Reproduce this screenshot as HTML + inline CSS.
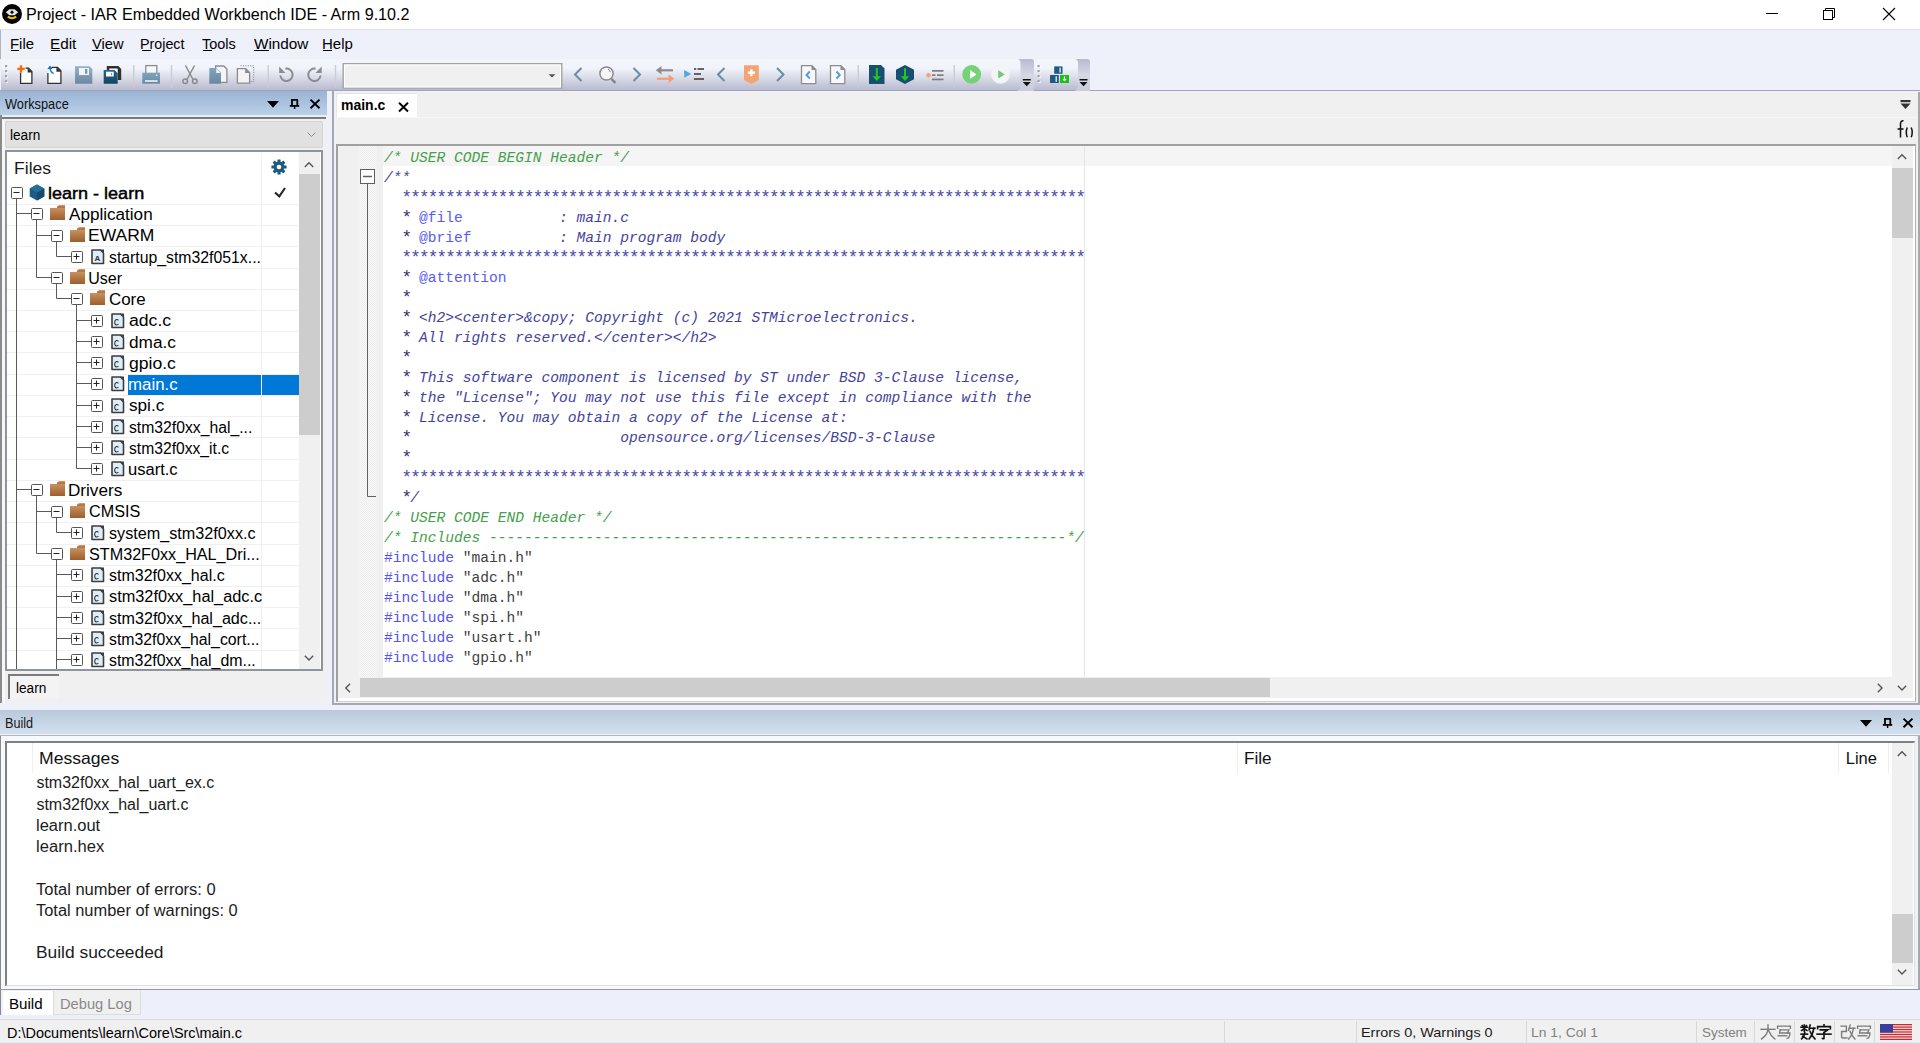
<!DOCTYPE html><html><head><meta charset="utf-8"><style>
*{margin:0;padding:0;box-sizing:border-box}
html,body{width:1920px;height:1043px;overflow:hidden;background:#eef1fa;font-family:"Liberation Sans",sans-serif;color:#000}
.a{position:absolute}
.t{position:absolute;white-space:pre;line-height:1}
svg{position:absolute;overflow:visible}
.code{position:absolute;left:384px;font-family:"Liberation Mono",monospace;font-size:14.583px;white-space:pre;line-height:20px;color:#35359a}
.g{color:#45a04a;font-style:italic}
.d{color:#43439e;font-style:italic}
.k{color:#5a5af2;font-style:normal}
.s{color:#404040}
.p{color:#5454f2}
.st1{line-height:0;font-size:17.5px;letter-spacing:-1.75px;position:relative;top:1.2px;font-style:normal;color:#353570}
.st{line-height:0;font-size:17.5px;letter-spacing:-1.75px;position:relative;top:1.2px;font-style:normal;color:#4a4aa6}
</style></head><body>
<div class="a" style="left:0px;top:0px;width:1920px;height:29px;background:#fff"></div>
<div class="a" style="left:0px;top:29px;width:1920px;height:1px;background:#dfe1ea"></div>
<svg style="left:2px;top:4px" width="21" height="21" viewBox="0 0 21 21"><circle cx="10" cy="10" r="10" fill="#050505"/><path d="M3.8 8.2 L7.5 5.2 H12.5 L16.2 8.2 L12.5 11.2 H7.5Z" fill="#e6e6e6"/><path d="M10 6.2 L12 8.2 L10 10.2 L8 8.2Z" fill="#111"/><path d="M5.8 12.6 Q10 15.8 14.2 12.6" fill="none" stroke="#e8c800" stroke-width="2"/></svg>
<div class="t" style="left:26.21px;top:7px;font-size:15.8px;color:#000;transform:scaleX(1.0214);transform-origin:0 0;">Project - IAR Embedded Workbench IDE - Arm 9.10.2</div>
<svg style="left:1760.5px;top:8px" width="140" height="14"><line x1="5" y1="5.5" x2="17" y2="5.5" stroke="#000" stroke-width="1"/><rect x="62.5" y="2.5" width="9" height="9" fill="none" stroke="#000"/><path d="M64.5 2.5 V0.5 H73.5 V9.5 H71.5" fill="none" stroke="#000"/><path d="M122 0 L134 12 M134 0 L122 12" stroke="#000" stroke-width="1.1"/></svg>
<div class="a" style="left:0px;top:30px;width:1920px;height:29px;background:#eef0fa"></div>
<div class="a" style="left:0px;top:30px;width:1px;height:29px;background:#b0b3c0"></div>
<div class="t" style="left:10.11px;top:37px;font-size:14.8px;color:#000;transform:scaleX(1.0056);transform-origin:0 0;">File</div>
<div class="a" style="left:11px;top:50px;width:8px;height:1px;background:#000"></div>
<div class="t" style="left:49.78px;top:37px;font-size:14.8px;color:#000;transform:scaleX(1.0331);transform-origin:0 0;">Edit</div>
<div class="a" style="left:51px;top:50px;width:9px;height:1px;background:#000"></div>
<div class="t" style="left:92.23px;top:37px;font-size:14.8px;color:#000;transform:scaleX(0.9923);transform-origin:0 0;">View</div>
<div class="a" style="left:92px;top:50px;width:11px;height:1px;background:#000"></div>
<div class="t" style="left:140.46px;top:37px;font-size:14.8px;color:#000;transform:scaleX(0.9649);transform-origin:0 0;">Project</div>
<div class="a" style="left:142px;top:50px;width:9px;height:1px;background:#000"></div>
<div class="t" style="left:202.24px;top:37px;font-size:14.8px;color:#000;transform:scaleX(0.9771);transform-origin:0 0;">Tools</div>
<div class="a" style="left:203px;top:50px;width:9px;height:1px;background:#000"></div>
<div class="t" style="left:254.12px;top:37px;font-size:14.8px;color:#000;transform:scaleX(1.0339);transform-origin:0 0;">Window</div>
<div class="a" style="left:254px;top:50px;width:15px;height:1px;background:#000"></div>
<div class="t" style="left:321.50px;top:37px;font-size:14.8px;color:#000;transform:scaleX(1.0161);transform-origin:0 0;">Help</div>
<div class="a" style="left:323px;top:50px;width:9px;height:1px;background:#000"></div>
<div class="a" style="left:1px;top:59px;width:1033px;height:32px;border-radius:3px 3px 0 0;background:linear-gradient(#f2f5fb 0%,#f1f4fc 28%,#dcdee9 55%,#c9cbdb 78%,#b8bbd0 97%)"></div>
<div class="a" style="left:1034px;top:59px;width:56px;height:32px;border-radius:3px 3px 0 0;background:linear-gradient(#f2f5fb 0%,#f1f4fc 28%,#dcdee9 55%,#c9cbdb 78%,#b8bbd0 97%)"></div>
<div class="a" style="left:0px;top:90px;width:1920px;height:1px;background:#a2a3b6"></div>
<svg style="left:0;top:0" width="1100" height="95"><rect x="5.8" y="65.8" width="2.2" height="2.2" fill="#fff"/><rect x="5" y="65" width="2.2" height="2.2" fill="#a2a2a6"/><rect x="5.8" y="70.8" width="2.2" height="2.2" fill="#fff"/><rect x="5" y="70" width="2.2" height="2.2" fill="#a2a2a6"/><rect x="5.8" y="75.8" width="2.2" height="2.2" fill="#fff"/><rect x="5" y="75" width="2.2" height="2.2" fill="#a2a2a6"/><rect x="5.8" y="80.8" width="2.2" height="2.2" fill="#fff"/><rect x="5" y="80" width="2.2" height="2.2" fill="#a2a2a6"/><rect x="1038.3" y="65.8" width="2.2" height="2.2" fill="#fff"/><rect x="1037.5" y="65" width="2.2" height="2.2" fill="#a2a2a6"/><rect x="1038.3" y="70.8" width="2.2" height="2.2" fill="#fff"/><rect x="1037.5" y="70" width="2.2" height="2.2" fill="#a2a2a6"/><rect x="1038.3" y="75.8" width="2.2" height="2.2" fill="#fff"/><rect x="1037.5" y="75" width="2.2" height="2.2" fill="#a2a2a6"/><rect x="1038.3" y="80.8" width="2.2" height="2.2" fill="#fff"/><rect x="1037.5" y="80" width="2.2" height="2.2" fill="#a2a2a6"/><path d="M20.6 72.5 V83.3 H31.9 V71.5 L28.5 68.1 H25.5" fill="#fff" stroke="#333" stroke-width="1.3"/><path d="M27.6 67.6 L32.4 72.4 H27.6Z" fill="#333"/><path d="M19.8 65.2 H22.2 V67.7 H24.7 V70.1 H22.2 V72.5 H19.8 V70.1 H17.3 V67.7 H19.8Z" fill="#ff6a00"/><path d="M47.9 73 V83.3 H60.9 V70.7 L57.5 67.3 H51.5" fill="#fff" stroke="#333" stroke-width="1.3"/><path d="M56.4 66.8 L61.4 71.8 H56.4Z" fill="#333"/><path d="M49.8 66.5 Q50.2 72.5 53.7 73.5" fill="none" stroke="#1a86d4" stroke-width="1.6"/><path d="M47.3 69 L50 65.8 L52.7 69Z" fill="#0a74c8"/><defs><linearGradient id="sv" x1="0" y1="0" x2="0" y2="1"><stop offset="0" stop-color="#93b3c8"/><stop offset="1" stop-color="#6f86a0"/></linearGradient><linearGradient id="sa" x1="0" y1="0" x2="0" y2="1"><stop offset="0" stop-color="#1e6690"/><stop offset="1" stop-color="#154460"/></linearGradient><linearGradient id="pb" x1="0" y1="0" x2="0" y2="1"><stop offset="0" stop-color="#7fa5bd"/><stop offset="1" stop-color="#6a879f"/></linearGradient></defs><path d="M75 66.3 H89.6 L92.3 69 V83.8 H75Z" fill="url(#sv)"/><rect x="79" y="68" width="10" height="7" fill="#f4f6fa"/><rect x="85" y="69" width="2.3" height="4.8" fill="#6e98b4"/><rect x="109" y="68" width="9" height="12" fill="#fff"/><path d="M106.8 70 V66 H118.3 L121.2 68.9 V80 H117.7 V68.6 H109.3 V70Z" fill="#303030"/><path d="M103.7 70 H114.5 L117.7 73.2 V83.8 H103.7Z" fill="url(#sa)"/><rect x="106" y="71.7" width="7.7" height="4.8" fill="#fff"/><path d="M111.3 72.8 A1.6 1.6 0 0 1 111.3 75.6Z" fill="#1e6690"/><rect x="170.8" y="65" width="1.4" height="23" fill="#cbccd4"/><rect x="267.5" y="65" width="1.4" height="23" fill="#cbccd4"/><rect x="334.8" y="65" width="1.4" height="23" fill="#cbccd4"/><rect x="857.5999999999999" y="65" width="1.4" height="23" fill="#cbccd4"/><rect x="953.5999999999999" y="65" width="1.4" height="23" fill="#cbccd4"/><rect x="133" y="65" width="1.4" height="23" fill="#cbccd4"/><rect x="145.8" y="65.6" width="11" height="8" fill="#f7f7f9" stroke="#8c8c90" stroke-width="1.3"/><rect x="142.3" y="72.7" width="17.7" height="11" fill="url(#pb)"/><rect x="145" y="80.2" width="12.5" height="1.6" fill="#eef2f6"/><rect x="156" y="74.6" width="1.4" height="1.4" fill="#e8eef4"/><g stroke="#8a8a8e" stroke-width="1.5" fill="none"><path d="M185.5 65.5 L193 79.5 M194.5 65.5 L187 79.5"/><circle cx="185.2" cy="81.3" r="2.3"/><circle cx="194.8" cy="81.3" r="2.3"/></g><path d="M215.6 66 H223.8 L226.9 69.1 V82.3 H215.6Z" fill="#f4f4f6" stroke="#8a8a8e" stroke-width="1.3"/><path d="M209.3 68 H216.4 L221 72.6 V83.7 H209.3Z" fill="url(#pb)"/><path d="M216.2 68.3 L220.8 72.9 H216.2Z" fill="#e8eef4"/><path d="M237.4 68.6 H245.7 L249.6 72.5 V83.2 H237.4Z" fill="#f4f4f6" stroke="#8a8a8e" stroke-width="1.3"/><path d="M245.2 68.1 L250.1 73 H245.2Z" fill="#8a8a8e"/><path d="M240.5 65.8 H253.7 V81.6 H250.5" fill="none" stroke="#8a8a8e" stroke-width="1" stroke-dasharray="1.2 1.2"/><g fill="none" stroke="#8b8b90" stroke-width="2"><path d="M280.3 75.5 A6.2 6.2 0 1 0 285.3 68.7"/><path d="M320.6 75.5 A6.2 6.2 0 1 1 315.6 68.7"/></g><path d="M279.2 66.5 V73 H285.5Z" fill="#8b8b90"/><path d="M321.7 66.5 V73 H315.4Z" fill="#8b8b90"/><rect x="343.2" y="63.7" width="218.6" height="24.3" fill="#f0f0f0" stroke="#a3a3a3" stroke-width="1.4"/><rect x="344.5" y="65" width="216" height="22" fill="none" stroke="#fff" stroke-width="1"/><path d="M548.5 74.2 H555.5 L552 77.5Z" fill="#555"/><path d="M581.5 68 L575 74.5 L581.5 81" fill="none" stroke="#6a8ca6" stroke-width="2"/><path d="M633.5 68 L640 74.5 L633.5 81" fill="none" stroke="#6a8ca6" stroke-width="2"/><path d="M724.5 68 L718 74.5 L724.5 81" fill="none" stroke="#6a8ca6" stroke-width="2"/><path d="M777.0 68 L783.5 74.5 L777.0 81" fill="none" stroke="#6a8ca6" stroke-width="2"/><circle cx="606.5" cy="73.5" r="6.6" fill="#f6f6f8" stroke="#8a8a8e" stroke-width="1.5"/><path d="M608 69 A4.3 4.3 0 0 1 610.3 72.2" fill="none" stroke="#8a8a8e" stroke-width="1"/><path d="M611.5 79 L615.5 83" stroke="#808084" stroke-width="2.4"/><path d="M660 70.3 H673" stroke="#8c8c90" stroke-width="2.2"/><path d="M655.8 70.3 L661.5 66 V74.6Z" fill="#8c8c90"/><path d="M657 78.8 H670" stroke="#f0a070" stroke-width="2.2"/><path d="M674.3 78.8 L668.6 74.5 V83.1Z" fill="#f0a070"/><path d="M684.2 70 L691.3 74 L684.2 77.8Z" fill="#56a6dc"/><rect x="694" y="68.2" width="2.3" height="1.6" fill="#444"/><rect x="697.5" y="68.2" width="6.5" height="1.6" fill="#444"/><rect x="694" y="73.2" width="7" height="1.6" fill="#444"/><rect x="694" y="78.2" width="10" height="1.6" fill="#444"/><path d="M744 65.3 H758.8 V80 L751.4 84 L744 80Z" fill="#f2a472"/><path d="M750.2 69.3 H752.6 V71.6 H754.9 V74 H752.6 V76.3 H750.2 V74 H747.9 V71.6 H750.2Z" fill="#fff"/><path d="M801.5 65.6 H811.8 L815.8 69.6 V83.6 H801.5Z" fill="#f8f8fa" stroke="#8c8c90" stroke-width="1.3"/><path d="M811.5 65.1 L816.3 69.9 H811.5Z" fill="#8c8c90"/><path d="M809.8 71.5 L806.5 75 L809.8 78.5" fill="none" stroke="#4aa0dc" stroke-width="1.9"/><path d="M830.5 65.6 H840.8 L844.8 69.6 V83.6 H830.5Z" fill="#f8f8fa" stroke="#8c8c90" stroke-width="1.3"/><path d="M840.5 65.1 L845.3 69.9 H840.5Z" fill="#8c8c90"/><path d="M836.5 71.5 L839.8 75 L836.5 78.5" fill="none" stroke="#4aa0dc" stroke-width="1.9"/><path d="M869 65 H881 L884.5 68.5 V84 H869Z" fill="#184e72"/><path d="M876.8 68 V78.5" stroke="#1ec81e" stroke-width="2"/><path d="M872.5 76.2 L876.8 81 L881 76.2Z" fill="#1ec81e"/><path d="M905 65 L914 69.8 V79.2 L905 84 L896 79.2 V69.8Z" fill="#184e72"/><path d="M905 68.3 V78.5" stroke="#1ec81e" stroke-width="2"/><path d="M900.7 76.2 L905 81 L909.3 76.2Z" fill="#1ec81e"/><circle cx="928.5" cy="75.3" r="2.3" fill="#f2a472"/><rect x="932" y="70" width="11.5" height="1.7" fill="#7c7c80"/><rect x="932" y="74.3" width="3.5" height="1.7" fill="#7c7c80"/><rect x="937" y="74.3" width="6.5" height="1.7" fill="#7c7c80"/><rect x="932" y="78.6" width="11.5" height="1.7" fill="#7c7c80"/><circle cx="971.7" cy="74.4" r="9.4" fill="#76d276"/><path d="M970 70 L976.5 74.4 L970 78.8Z" fill="#fff"/><circle cx="1000.5" cy="74.4" r="9.4" fill="#f3f4f9"/><path d="M998.2 70.2 L1004.8 74.4 L998.2 78.6Z" fill="#6dcc6d"/><defs><linearGradient id="ec" x1="0" y1="0" x2="0" y2="1"><stop offset="0" stop-color="#b8bbcf"/><stop offset="0.5" stop-color="#d6d8e6"/><stop offset="1" stop-color="#c9cbdc"/></linearGradient></defs><path d="M1017.5 59 H1031 Q1034 59 1034 62 V91 H1016.5 Q1020.5 90 1020.5 86 V63 Q1020.5 59.5 1017.5 59Z" fill="url(#ec)"/><rect x="1022.75" y="79" width="8" height="1.5" fill="#111"/><path d="M1022.75 82 H1030.75 L1026.75 86.2Z" fill="#111"/><path d="M1075 59 H1087 Q1090 59 1090 62 V91 H1074 Q1078 90 1078 86 V63 Q1078 59.5 1075 59Z" fill="url(#ec)"/><rect x="1079.5" y="79" width="8" height="1.5" fill="#111"/><path d="M1079.5 82 H1087.5 L1083.5 86.2Z" fill="#111"/><rect x="1054.2" y="66.4" width="8.3" height="7.4" fill="#1e5a80"/><rect x="1059.5" y="67.6" width="1.2" height="5" fill="#fff"/><rect x="1050" y="75" width="8.8" height="8" fill="#1e5a80"/><rect x="1055.6" y="76.2" width="1.2" height="5.6" fill="#fff"/><rect x="1060" y="75" width="9" height="8" fill="#18c018"/><path d="M1064.5 76.5 V80.5" stroke="#fff" stroke-width="1.3"/><path d="M1062.3 79 H1066.7 L1064.5 81.6Z" fill="#fff"/></svg>
<div class="a" style="left:0px;top:91px;width:327px;height:24px;background:linear-gradient(#9ab4d4,#bbd0e9)"></div>
<div class="a" style="left:327px;top:91px;width:5px;height:614px;background:#eef1fa"></div>
<div class="t" style="left:5.04px;top:97px;font-size:14.4px;color:#111;transform:scaleX(0.8888);transform-origin:0 0;">Workspace</div>
<div class="a" style="left:0px;top:115px;width:327px;height:588px;background:#f0f0f0"></div>
<div class="a" style="left:0px;top:115px;width:327px;height:2px;background:#e9ecf6"></div>
<div class="a" style="left:0px;top:117px;width:326px;height:2px;background:#7c7c7c"></div>
<div class="a" style="left:0px;top:115px;width:2px;height:588px;background:#8a8a8a"></div>
<div class="a" style="left:2px;top:119px;width:324px;height:584px;background:#f0f0f0;border-left:3px solid #f7f7f7"></div>
<div class="a" style="left:5px;top:121px;width:318px;height:27px;background:#e1e1e1;border:1px solid #d4d4d4;border-radius:2px"></div>
<div class="t" style="left:9.82px;top:128px;font-size:14.9px;color:#000;transform:scaleX(0.9130);transform-origin:0 0;">learn</div>
<svg style="left:307px;top:132px" width="9" height="5"><path d="M0.5 0.5 L4.5 4.5 L8.5 0.5" fill="none" stroke="#8a8a8a"/></svg>
<div class="a" style="left:5px;top:150px;width:318px;height:521px;background:#fff;border:2px solid #8e949e"></div>
<div class="a" style="left:299px;top:152px;width:21px;height:517px;background:#f0f0f0"></div>
<div class="a" style="left:299px;top:174px;width:21px;height:261px;background:#cdcdcd"></div>
<svg style="left:304px;top:162px" width="10" height="6"><path d="M0.8 5 L5 0.8 L9.2 5" fill="none" stroke="#555" stroke-width="1.4"/></svg>
<svg style="left:304px;top:655px" width="10" height="6"><path d="M0.8 0.8 L5 5 L9.2 0.8" fill="none" stroke="#555" stroke-width="1.4"/></svg>
<div class="t" style="left:14.09px;top:161px;font-size:16.8px;color:#1a1a1a;transform:scaleX(1.0473);transform-origin:0 0;">Files</div>
<div class="a" style="left:261px;top:153px;width:1px;height:516px;background:#f0f0f0"></div>
<svg style="left:271px;top:158.5px" width="16" height="16" viewBox="-8 -8 16 16"><g fill="#1d5a80"><rect x="-1.6" y="-7.6" width="3.2" height="4" rx="0.5" transform="rotate(0)"/><rect x="-1.6" y="-7.6" width="3.2" height="4" rx="0.5" transform="rotate(45)"/><rect x="-1.6" y="-7.6" width="3.2" height="4" rx="0.5" transform="rotate(90)"/><rect x="-1.6" y="-7.6" width="3.2" height="4" rx="0.5" transform="rotate(135)"/><rect x="-1.6" y="-7.6" width="3.2" height="4" rx="0.5" transform="rotate(180)"/><rect x="-1.6" y="-7.6" width="3.2" height="4" rx="0.5" transform="rotate(225)"/><rect x="-1.6" y="-7.6" width="3.2" height="4" rx="0.5" transform="rotate(270)"/><rect x="-1.6" y="-7.6" width="3.2" height="4" rx="0.5" transform="rotate(315)"/><circle r="5.4"/></g><circle r="2.3" fill="#fff"/></svg>
<div class="a" style="left:7px;top:204px;width:292px;height:1px;background:#f0f0f0"></div>
<div class="a" style="left:7px;top:225px;width:292px;height:1px;background:#f0f0f0"></div>
<div class="a" style="left:7px;top:246px;width:292px;height:1px;background:#f0f0f0"></div>
<div class="a" style="left:7px;top:268px;width:292px;height:1px;background:#f0f0f0"></div>
<div class="a" style="left:7px;top:289px;width:292px;height:1px;background:#f0f0f0"></div>
<div class="a" style="left:7px;top:310px;width:292px;height:1px;background:#f0f0f0"></div>
<div class="a" style="left:7px;top:331px;width:292px;height:1px;background:#f0f0f0"></div>
<div class="a" style="left:7px;top:352px;width:292px;height:1px;background:#f0f0f0"></div>
<div class="a" style="left:7px;top:374px;width:292px;height:1px;background:#f0f0f0"></div>
<div class="a" style="left:7px;top:395px;width:292px;height:1px;background:#f0f0f0"></div>
<div class="a" style="left:7px;top:416px;width:292px;height:1px;background:#f0f0f0"></div>
<div class="a" style="left:7px;top:437px;width:292px;height:1px;background:#f0f0f0"></div>
<div class="a" style="left:7px;top:459px;width:292px;height:1px;background:#f0f0f0"></div>
<div class="a" style="left:7px;top:480px;width:292px;height:1px;background:#f0f0f0"></div>
<div class="a" style="left:7px;top:501px;width:292px;height:1px;background:#f0f0f0"></div>
<div class="a" style="left:7px;top:522px;width:292px;height:1px;background:#f0f0f0"></div>
<div class="a" style="left:7px;top:544px;width:292px;height:1px;background:#f0f0f0"></div>
<div class="a" style="left:7px;top:565px;width:292px;height:1px;background:#f0f0f0"></div>
<div class="a" style="left:7px;top:586px;width:292px;height:1px;background:#f0f0f0"></div>
<div class="a" style="left:7px;top:607px;width:292px;height:1px;background:#f0f0f0"></div>
<div class="a" style="left:7px;top:628px;width:292px;height:1px;background:#f0f0f0"></div>
<div class="a" style="left:7px;top:650px;width:292px;height:1px;background:#f0f0f0"></div>
<div class="a" style="left:128px;top:375px;width:133px;height:20px;background:#0078d7"></div>
<div class="a" style="left:262px;top:375px;width:37px;height:20px;background:#0078d7"></div>
<svg style="left:0;top:0" width="330" height="672"><g stroke="#5a5a5a" stroke-width="1"><line x1="16.5" y1="199" x2="16.5" y2="669"/><line x1="16.5" y1="213.5" x2="31" y2="213.5"/><line x1="16.5" y1="489.5" x2="31" y2="489.5"/><line x1="36.5" y1="219.5" x2="36.5" y2="277.5"/><line x1="36.5" y1="235.5" x2="51" y2="235.5"/><line x1="36.5" y1="277.5" x2="51" y2="277.5"/><line x1="56.5" y1="241.5" x2="56.5" y2="256.5"/><line x1="56.5" y1="256.5" x2="71" y2="256.5"/><line x1="56.5" y1="283.5" x2="56.5" y2="298.5"/><line x1="56.5" y1="298.5" x2="71" y2="298.5"/><line x1="76.5" y1="304.5" x2="76.5" y2="468.5"/><line x1="76.5" y1="320.5" x2="91" y2="320.5"/><line x1="76.5" y1="341.5" x2="91" y2="341.5"/><line x1="76.5" y1="362.5" x2="91" y2="362.5"/><line x1="76.5" y1="383.5" x2="91" y2="383.5"/><line x1="76.5" y1="405.5" x2="91" y2="405.5"/><line x1="76.5" y1="426.5" x2="91" y2="426.5"/><line x1="76.5" y1="447.5" x2="91" y2="447.5"/><line x1="76.5" y1="468.5" x2="91" y2="468.5"/><line x1="36.5" y1="495.5" x2="36.5" y2="553.5"/><line x1="36.5" y1="511.5" x2="51" y2="511.5"/><line x1="36.5" y1="553.5" x2="51" y2="553.5"/><line x1="56.5" y1="517.5" x2="56.5" y2="532.5"/><line x1="56.5" y1="532.5" x2="71" y2="532.5"/><line x1="56.5" y1="559.5" x2="56.5" y2="669"/><line x1="56.5" y1="574.5" x2="71" y2="574.5"/><line x1="56.5" y1="596.5" x2="71" y2="596.5"/><line x1="56.5" y1="617.5" x2="71" y2="617.5"/><line x1="56.5" y1="638.5" x2="71" y2="638.5"/><line x1="56.5" y1="659.5" x2="71" y2="659.5"/></g></svg>
<svg width="0" height="0" style="left:0;top:0"><defs><linearGradient id="fg" x1="0" y1="0" x2="0" y2="1"><stop offset="0" stop-color="#c99060"/><stop offset="1" stop-color="#9c5e2c"/></linearGradient></defs></svg>
<svg style="left:11px;top:187px" width="12" height="12"><rect x="0.5" y="0.5" width="11" height="11" rx="1" fill="#fff" stroke="#555"/><line x1="2.5" y1="5.5" x2="8.5" y2="5.5" stroke="#222"/></svg>
<svg style="left:29px;top:184px" width="16" height="17" viewBox="0 0 16 17"><path d="M8 0.5 L15.3 4.5 V12.5 L8 16.5 L0.7 12.5 V4.5Z" fill="#1c5b85"/><path d="M8 8.5 L15.3 4.5 V12.5 L8 16.5Z" fill="#164a6c"/><path d="M0.7 4.5 L8 0.5 L15.3 4.5 L8 8.5Z" fill="#2a6d98"/></svg>
<div class="t" style="left:48.33px;top:186px;font-size:16px;color:#000;transform:scaleX(1.1263);transform-origin:0 0;-webkit-text-stroke:0.45px #000;">learn - learn</div>
<svg style="left:31px;top:208px" width="12" height="12"><rect x="0.5" y="0.5" width="11" height="11" rx="1" fill="#fff" stroke="#555"/><line x1="2.5" y1="5.5" x2="8.5" y2="5.5" stroke="#222"/></svg>
<svg style="left:50px;top:204.5px" width="16" height="16"><path d="M7 2 Q7.5 0.3 9.5 0.3 H15 V3 H7Z" fill="#b87640"/><rect x="0" y="3" width="15" height="12" fill="url(#fg)"/></svg>
<div class="t" style="left:69.41px;top:207px;font-size:16px;color:#000;transform:scaleX(1.0685);transform-origin:0 0;">Application</div>
<svg style="left:51px;top:230px" width="12" height="12"><rect x="0.5" y="0.5" width="11" height="11" rx="1" fill="#fff" stroke="#555"/><line x1="2.5" y1="5.5" x2="8.5" y2="5.5" stroke="#222"/></svg>
<svg style="left:70px;top:226.5px" width="16" height="16"><path d="M7 2 Q7.5 0.3 9.5 0.3 H15 V3 H7Z" fill="#b87640"/><rect x="0" y="3" width="15" height="12" fill="url(#fg)"/></svg>
<div class="t" style="left:88.10px;top:228px;font-size:16px;color:#000;transform:scaleX(1.0918);transform-origin:0 0;">EWARM</div>
<svg style="left:71px;top:251px" width="12" height="12"><rect x="0.5" y="0.5" width="11" height="11" rx="1" fill="#fff" stroke="#555"/><line x1="2.5" y1="5.5" x2="8.5" y2="5.5" stroke="#222"/><line x1="5.5" y1="2.5" x2="5.5" y2="8.5" stroke="#222"/></svg>
<svg style="left:91px;top:248.5px" width="14" height="16"><path d="M1 1 H9.5 L12.5 4 V14.5 H1Z" fill="#ddeefa" stroke="#3d3d3d" stroke-width="1.6" stroke-linejoin="round"/><path d="M9 0.5 L13 4.5 V0.5Z" fill="#3d3d3d"/><text x="6.5" y="12.3" font-family="Liberation Sans" font-weight="bold" font-size="8" text-anchor="middle" fill="#333">A</text></svg>
<div class="t" style="left:109.03px;top:250px;font-size:16px;color:#000;transform:scaleX(0.9874);transform-origin:0 0;">startup_stm32f051x...</div>
<svg style="left:51px;top:272px" width="12" height="12"><rect x="0.5" y="0.5" width="11" height="11" rx="1" fill="#fff" stroke="#555"/><line x1="2.5" y1="5.5" x2="8.5" y2="5.5" stroke="#222"/></svg>
<svg style="left:70px;top:268.5px" width="16" height="16"><path d="M7 2 Q7.5 0.3 9.5 0.3 H15 V3 H7Z" fill="#b87640"/><rect x="0" y="3" width="15" height="12" fill="url(#fg)"/></svg>
<div class="t" style="left:88.30px;top:271px;font-size:16px;color:#000;">User</div>
<svg style="left:71px;top:293px" width="12" height="12"><rect x="0.5" y="0.5" width="11" height="11" rx="1" fill="#fff" stroke="#555"/><line x1="2.5" y1="5.5" x2="8.5" y2="5.5" stroke="#222"/></svg>
<svg style="left:90px;top:289.5px" width="16" height="16"><path d="M7 2 Q7.5 0.3 9.5 0.3 H15 V3 H7Z" fill="#b87640"/><rect x="0" y="3" width="15" height="12" fill="url(#fg)"/></svg>
<div class="t" style="left:108.65px;top:292px;font-size:16px;color:#000;transform:scaleX(1.0568);transform-origin:0 0;">Core</div>
<svg style="left:91px;top:315px" width="12" height="12"><rect x="0.5" y="0.5" width="11" height="11" rx="1" fill="#fff" stroke="#555"/><line x1="2.5" y1="5.5" x2="8.5" y2="5.5" stroke="#222"/><line x1="5.5" y1="2.5" x2="5.5" y2="8.5" stroke="#222"/></svg>
<svg style="left:111px;top:312.5px" width="14" height="16"><path d="M1 1 H9.5 L12.5 4 V14.5 H1Z" fill="#ddeefa" stroke="#3d3d3d" stroke-width="1.6" stroke-linejoin="round"/><path d="M9 0.5 L13 4.5 V0.5Z" fill="#3d3d3d"/><path d="M7.4 7.4 Q6.7 6.3 5.5 6.5 Q3.7 6.9 3.7 9.2 Q3.7 11.7 5.5 11.9 Q6.8 12 7.4 11" fill="none" stroke="#333" stroke-width="1.05"/></svg>
<div class="t" style="left:128.71px;top:313px;font-size:16px;color:#000;transform:scaleX(1.1018);transform-origin:0 0;">adc.c</div>
<svg style="left:91px;top:336px" width="12" height="12"><rect x="0.5" y="0.5" width="11" height="11" rx="1" fill="#fff" stroke="#555"/><line x1="2.5" y1="5.5" x2="8.5" y2="5.5" stroke="#222"/><line x1="5.5" y1="2.5" x2="5.5" y2="8.5" stroke="#222"/></svg>
<svg style="left:111px;top:333.5px" width="14" height="16"><path d="M1 1 H9.5 L12.5 4 V14.5 H1Z" fill="#ddeefa" stroke="#3d3d3d" stroke-width="1.6" stroke-linejoin="round"/><path d="M9 0.5 L13 4.5 V0.5Z" fill="#3d3d3d"/><path d="M7.4 7.4 Q6.7 6.3 5.5 6.5 Q3.7 6.9 3.7 9.2 Q3.7 11.7 5.5 11.9 Q6.8 12 7.4 11" fill="none" stroke="#333" stroke-width="1.05"/></svg>
<div class="t" style="left:128.81px;top:335px;font-size:16px;color:#000;transform:scaleX(1.0761);transform-origin:0 0;">dma.c</div>
<svg style="left:91px;top:357px" width="12" height="12"><rect x="0.5" y="0.5" width="11" height="11" rx="1" fill="#fff" stroke="#555"/><line x1="2.5" y1="5.5" x2="8.5" y2="5.5" stroke="#222"/><line x1="5.5" y1="2.5" x2="5.5" y2="8.5" stroke="#222"/></svg>
<svg style="left:111px;top:354.5px" width="14" height="16"><path d="M1 1 H9.5 L12.5 4 V14.5 H1Z" fill="#ddeefa" stroke="#3d3d3d" stroke-width="1.6" stroke-linejoin="round"/><path d="M9 0.5 L13 4.5 V0.5Z" fill="#3d3d3d"/><path d="M7.4 7.4 Q6.7 6.3 5.5 6.5 Q3.7 6.9 3.7 9.2 Q3.7 11.7 5.5 11.9 Q6.8 12 7.4 11" fill="none" stroke="#333" stroke-width="1.05"/></svg>
<div class="t" style="left:128.80px;top:356px;font-size:16px;color:#000;transform:scaleX(1.0988);transform-origin:0 0;">gpio.c</div>
<svg style="left:91px;top:378px" width="12" height="12"><rect x="0.5" y="0.5" width="11" height="11" rx="1" fill="#fff" stroke="#555"/><line x1="2.5" y1="5.5" x2="8.5" y2="5.5" stroke="#222"/><line x1="5.5" y1="2.5" x2="5.5" y2="8.5" stroke="#222"/></svg>
<svg style="left:111px;top:375.5px" width="14" height="16"><path d="M1 1 H9.5 L12.5 4 V14.5 H1Z" fill="#ddeefa" stroke="#3d3d3d" stroke-width="1.6" stroke-linejoin="round"/><path d="M9 0.5 L13 4.5 V0.5Z" fill="#3d3d3d"/><path d="M7.4 7.4 Q6.7 6.3 5.5 6.5 Q3.7 6.9 3.7 9.2 Q3.7 11.7 5.5 11.9 Q6.8 12 7.4 11" fill="none" stroke="#333" stroke-width="1.05"/></svg>
<div class="t" style="left:128.40px;top:377px;font-size:16px;color:#fff;transform:scaleX(1.0530);transform-origin:0 0;">main.c</div>
<svg style="left:91px;top:400px" width="12" height="12"><rect x="0.5" y="0.5" width="11" height="11" rx="1" fill="#fff" stroke="#555"/><line x1="2.5" y1="5.5" x2="8.5" y2="5.5" stroke="#222"/><line x1="5.5" y1="2.5" x2="5.5" y2="8.5" stroke="#222"/></svg>
<svg style="left:111px;top:397.5px" width="14" height="16"><path d="M1 1 H9.5 L12.5 4 V14.5 H1Z" fill="#ddeefa" stroke="#3d3d3d" stroke-width="1.6" stroke-linejoin="round"/><path d="M9 0.5 L13 4.5 V0.5Z" fill="#3d3d3d"/><path d="M7.4 7.4 Q6.7 6.3 5.5 6.5 Q3.7 6.9 3.7 9.2 Q3.7 11.7 5.5 11.9 Q6.8 12 7.4 11" fill="none" stroke="#333" stroke-width="1.05"/></svg>
<div class="t" style="left:128.99px;top:398px;font-size:16px;color:#000;transform:scaleX(1.0719);transform-origin:0 0;">spi.c</div>
<svg style="left:91px;top:421px" width="12" height="12"><rect x="0.5" y="0.5" width="11" height="11" rx="1" fill="#fff" stroke="#555"/><line x1="2.5" y1="5.5" x2="8.5" y2="5.5" stroke="#222"/><line x1="5.5" y1="2.5" x2="5.5" y2="8.5" stroke="#222"/></svg>
<svg style="left:111px;top:418.5px" width="14" height="16"><path d="M1 1 H9.5 L12.5 4 V14.5 H1Z" fill="#ddeefa" stroke="#3d3d3d" stroke-width="1.6" stroke-linejoin="round"/><path d="M9 0.5 L13 4.5 V0.5Z" fill="#3d3d3d"/><path d="M7.4 7.4 Q6.7 6.3 5.5 6.5 Q3.7 6.9 3.7 9.2 Q3.7 11.7 5.5 11.9 Q6.8 12 7.4 11" fill="none" stroke="#333" stroke-width="1.05"/></svg>
<div class="t" style="left:129.03px;top:420px;font-size:16px;color:#000;transform:scaleX(0.9835);transform-origin:0 0;">stm32f0xx_hal_...</div>
<svg style="left:91px;top:442px" width="12" height="12"><rect x="0.5" y="0.5" width="11" height="11" rx="1" fill="#fff" stroke="#555"/><line x1="2.5" y1="5.5" x2="8.5" y2="5.5" stroke="#222"/><line x1="5.5" y1="2.5" x2="5.5" y2="8.5" stroke="#222"/></svg>
<svg style="left:111px;top:439.5px" width="14" height="16"><path d="M1 1 H9.5 L12.5 4 V14.5 H1Z" fill="#ddeefa" stroke="#3d3d3d" stroke-width="1.6" stroke-linejoin="round"/><path d="M9 0.5 L13 4.5 V0.5Z" fill="#3d3d3d"/><path d="M7.4 7.4 Q6.7 6.3 5.5 6.5 Q3.7 6.9 3.7 9.2 Q3.7 11.7 5.5 11.9 Q6.8 12 7.4 11" fill="none" stroke="#333" stroke-width="1.05"/></svg>
<div class="t" style="left:129.03px;top:441px;font-size:16px;color:#000;transform:scaleX(0.9787);transform-origin:0 0;">stm32f0xx_it.c</div>
<svg style="left:91px;top:463px" width="12" height="12"><rect x="0.5" y="0.5" width="11" height="11" rx="1" fill="#fff" stroke="#555"/><line x1="2.5" y1="5.5" x2="8.5" y2="5.5" stroke="#222"/><line x1="5.5" y1="2.5" x2="5.5" y2="8.5" stroke="#222"/></svg>
<svg style="left:111px;top:460.5px" width="14" height="16"><path d="M1 1 H9.5 L12.5 4 V14.5 H1Z" fill="#ddeefa" stroke="#3d3d3d" stroke-width="1.6" stroke-linejoin="round"/><path d="M9 0.5 L13 4.5 V0.5Z" fill="#3d3d3d"/><path d="M7.4 7.4 Q6.7 6.3 5.5 6.5 Q3.7 6.9 3.7 9.2 Q3.7 11.7 5.5 11.9 Q6.8 12 7.4 11" fill="none" stroke="#333" stroke-width="1.05"/></svg>
<div class="t" style="left:128.43px;top:462px;font-size:16px;color:#000;transform:scaleX(1.0331);transform-origin:0 0;">usart.c</div>
<svg style="left:31px;top:484px" width="12" height="12"><rect x="0.5" y="0.5" width="11" height="11" rx="1" fill="#fff" stroke="#555"/><line x1="2.5" y1="5.5" x2="8.5" y2="5.5" stroke="#222"/></svg>
<svg style="left:50px;top:480.5px" width="16" height="16"><path d="M7 2 Q7.5 0.3 9.5 0.3 H15 V3 H7Z" fill="#b87640"/><rect x="0" y="3" width="15" height="12" fill="url(#fg)"/></svg>
<div class="t" style="left:68.13px;top:483px;font-size:16px;color:#000;transform:scaleX(1.0697);transform-origin:0 0;">Drivers</div>
<svg style="left:51px;top:506px" width="12" height="12"><rect x="0.5" y="0.5" width="11" height="11" rx="1" fill="#fff" stroke="#555"/><line x1="2.5" y1="5.5" x2="8.5" y2="5.5" stroke="#222"/></svg>
<svg style="left:70px;top:502.5px" width="16" height="16"><path d="M7 2 Q7.5 0.3 9.5 0.3 H15 V3 H7Z" fill="#b87640"/><rect x="0" y="3" width="15" height="12" fill="url(#fg)"/></svg>
<div class="t" style="left:88.69px;top:504px;font-size:16px;color:#000;transform:scaleX(1.0118);transform-origin:0 0;">CMSIS</div>
<svg style="left:71px;top:527px" width="12" height="12"><rect x="0.5" y="0.5" width="11" height="11" rx="1" fill="#fff" stroke="#555"/><line x1="2.5" y1="5.5" x2="8.5" y2="5.5" stroke="#222"/><line x1="5.5" y1="2.5" x2="5.5" y2="8.5" stroke="#222"/></svg>
<svg style="left:91px;top:524.5px" width="14" height="16"><path d="M1 1 H9.5 L12.5 4 V14.5 H1Z" fill="#ddeefa" stroke="#3d3d3d" stroke-width="1.6" stroke-linejoin="round"/><path d="M9 0.5 L13 4.5 V0.5Z" fill="#3d3d3d"/><path d="M7.4 7.4 Q6.7 6.3 5.5 6.5 Q3.7 6.9 3.7 9.2 Q3.7 11.7 5.5 11.9 Q6.8 12 7.4 11" fill="none" stroke="#333" stroke-width="1.05"/></svg>
<div class="t" style="left:109.01px;top:526px;font-size:16px;color:#000;transform:scaleX(1.0112);transform-origin:0 0;">system_stm32f0xx.c</div>
<svg style="left:51px;top:548px" width="12" height="12"><rect x="0.5" y="0.5" width="11" height="11" rx="1" fill="#fff" stroke="#555"/><line x1="2.5" y1="5.5" x2="8.5" y2="5.5" stroke="#222"/></svg>
<svg style="left:70px;top:544.5px" width="16" height="16"><path d="M7 2 Q7.5 0.3 9.5 0.3 H15 V3 H7Z" fill="#b87640"/><rect x="0" y="3" width="15" height="12" fill="url(#fg)"/></svg>
<div class="t" style="left:88.77px;top:547px;font-size:16px;color:#000;transform:scaleX(1.0107);transform-origin:0 0;">STM32F0xx_HAL_Dri...</div>
<svg style="left:71px;top:569px" width="12" height="12"><rect x="0.5" y="0.5" width="11" height="11" rx="1" fill="#fff" stroke="#555"/><line x1="2.5" y1="5.5" x2="8.5" y2="5.5" stroke="#222"/><line x1="5.5" y1="2.5" x2="5.5" y2="8.5" stroke="#222"/></svg>
<svg style="left:91px;top:566.5px" width="14" height="16"><path d="M1 1 H9.5 L12.5 4 V14.5 H1Z" fill="#ddeefa" stroke="#3d3d3d" stroke-width="1.6" stroke-linejoin="round"/><path d="M9 0.5 L13 4.5 V0.5Z" fill="#3d3d3d"/><path d="M7.4 7.4 Q6.7 6.3 5.5 6.5 Q3.7 6.9 3.7 9.2 Q3.7 11.7 5.5 11.9 Q6.8 12 7.4 11" fill="none" stroke="#333" stroke-width="1.05"/></svg>
<div class="t" style="left:109.02px;top:568px;font-size:16px;color:#000;">stm32f0xx_hal.c</div>
<svg style="left:71px;top:591px" width="12" height="12"><rect x="0.5" y="0.5" width="11" height="11" rx="1" fill="#fff" stroke="#555"/><line x1="2.5" y1="5.5" x2="8.5" y2="5.5" stroke="#222"/><line x1="5.5" y1="2.5" x2="5.5" y2="8.5" stroke="#222"/></svg>
<svg style="left:91px;top:588.5px" width="14" height="16"><path d="M1 1 H9.5 L12.5 4 V14.5 H1Z" fill="#ddeefa" stroke="#3d3d3d" stroke-width="1.6" stroke-linejoin="round"/><path d="M9 0.5 L13 4.5 V0.5Z" fill="#3d3d3d"/><path d="M7.4 7.4 Q6.7 6.3 5.5 6.5 Q3.7 6.9 3.7 9.2 Q3.7 11.7 5.5 11.9 Q6.8 12 7.4 11" fill="none" stroke="#333" stroke-width="1.05"/></svg>
<div class="t" style="left:109.01px;top:589px;font-size:16px;color:#000;transform:scaleX(1.0185);transform-origin:0 0;">stm32f0xx_hal_adc.c</div>
<svg style="left:71px;top:612px" width="12" height="12"><rect x="0.5" y="0.5" width="11" height="11" rx="1" fill="#fff" stroke="#555"/><line x1="2.5" y1="5.5" x2="8.5" y2="5.5" stroke="#222"/><line x1="5.5" y1="2.5" x2="5.5" y2="8.5" stroke="#222"/></svg>
<svg style="left:91px;top:609.5px" width="14" height="16"><path d="M1 1 H9.5 L12.5 4 V14.5 H1Z" fill="#ddeefa" stroke="#3d3d3d" stroke-width="1.6" stroke-linejoin="round"/><path d="M9 0.5 L13 4.5 V0.5Z" fill="#3d3d3d"/><path d="M7.4 7.4 Q6.7 6.3 5.5 6.5 Q3.7 6.9 3.7 9.2 Q3.7 11.7 5.5 11.9 Q6.8 12 7.4 11" fill="none" stroke="#333" stroke-width="1.05"/></svg>
<div class="t" style="left:109.02px;top:611px;font-size:16px;color:#000;transform:scaleX(1.0074);transform-origin:0 0;">stm32f0xx_hal_adc...</div>
<svg style="left:71px;top:633px" width="12" height="12"><rect x="0.5" y="0.5" width="11" height="11" rx="1" fill="#fff" stroke="#555"/><line x1="2.5" y1="5.5" x2="8.5" y2="5.5" stroke="#222"/><line x1="5.5" y1="2.5" x2="5.5" y2="8.5" stroke="#222"/></svg>
<svg style="left:91px;top:630.5px" width="14" height="16"><path d="M1 1 H9.5 L12.5 4 V14.5 H1Z" fill="#ddeefa" stroke="#3d3d3d" stroke-width="1.6" stroke-linejoin="round"/><path d="M9 0.5 L13 4.5 V0.5Z" fill="#3d3d3d"/><path d="M7.4 7.4 Q6.7 6.3 5.5 6.5 Q3.7 6.9 3.7 9.2 Q3.7 11.7 5.5 11.9 Q6.8 12 7.4 11" fill="none" stroke="#333" stroke-width="1.05"/></svg>
<div class="t" style="left:109.03px;top:632px;font-size:16px;color:#000;transform:scaleX(0.9895);transform-origin:0 0;">stm32f0xx_hal_cort...</div>
<svg style="left:71px;top:654px" width="12" height="12"><rect x="0.5" y="0.5" width="11" height="11" rx="1" fill="#fff" stroke="#555"/><line x1="2.5" y1="5.5" x2="8.5" y2="5.5" stroke="#222"/><line x1="5.5" y1="2.5" x2="5.5" y2="8.5" stroke="#222"/></svg>
<svg style="left:91px;top:651.5px" width="14" height="16"><path d="M1 1 H9.5 L12.5 4 V14.5 H1Z" fill="#ddeefa" stroke="#3d3d3d" stroke-width="1.6" stroke-linejoin="round"/><path d="M9 0.5 L13 4.5 V0.5Z" fill="#3d3d3d"/><path d="M7.4 7.4 Q6.7 6.3 5.5 6.5 Q3.7 6.9 3.7 9.2 Q3.7 11.7 5.5 11.9 Q6.8 12 7.4 11" fill="none" stroke="#333" stroke-width="1.05"/></svg>
<div class="t" style="left:109.02px;top:653px;font-size:16px;color:#000;transform:scaleX(0.9940);transform-origin:0 0;">stm32f0xx_hal_dm...</div>
<svg style="left:273px;top:187px" width="14" height="12"><path d="M2 5.5 L6.3 9.3 L12 1" fill="none" stroke="#2a2a2a" stroke-width="2.2"/></svg>
<div class="a" style="left:8px;top:674px;width:51px;height:25px;background:#f3f3f3;border-top:2px solid #7c7c7c;border-left:2px solid #7c7c7c"></div>
<div class="t" style="left:16.12px;top:681px;font-size:14.9px;color:#000;transform:scaleX(0.9130);transform-origin:0 0;">learn</div>
<div class="a" style="left:332px;top:91px;width:1588px;height:614px;background:#eef1fa;border-left:2px solid #a6a7b0;border-bottom:2px solid #a6a7b0"></div>
<div class="a" style="left:336px;top:92px;width:1582px;height:611px;background:#f0f0f0"></div>
<div class="a" style="left:336px;top:91px;width:1582px;height:1px;background:#eef1fa"></div>
<div class="a" style="left:336px;top:93px;width:81px;height:24px;background:#fff;border-top:1px solid #e2e2e2;border-left:1px solid #e6e6e6"></div>
<div class="t" style="left:341.34px;top:98px;font-size:14.5px;color:#000;font-weight:bold;transform:scaleX(0.9648);transform-origin:0 0;">main.c</div>
<svg style="left:398px;top:102px" width="11" height="10"><path d="M1 0.8 L10 9.5 M10 0.8 L1 9.5" stroke="#000" stroke-width="1.9"/></svg>
<div class="a" style="left:336px;top:117px;width:1582px;height:1px;background:#f6f7fc"></div>
<svg style="left:1900px;top:100px" width="11" height="10"><rect x="0.5" y="0" width="10" height="2.2" fill="#333"/><path d="M0.5 3.5 H10.5 L5.5 9Z" fill="#333"/></svg>
<svg style="left:1895px;top:119px" width="20" height="20" viewBox="0 0 20 20"><g fill="none" stroke="#111" stroke-width="1.5"><path d="M5.5 18.5 V5 Q5.5 1.5 8.5 1.8"/><path d="M2.5 10 H8.5"/><path d="M12.3 8.5 Q10.2 13.3 12.3 18.3"/><path d="M16.2 8.5 Q18.3 13.3 16.2 18.3"/></g></svg>
<div class="a" style="left:336px;top:144px;width:1580px;height:558px;background:#fff;border-top:2px solid #a0a0a0;border-left:2px solid #a0a0a0;border-right:1px solid #b0b0b0;border-bottom:1px solid #d0d0d0"></div>
<div class="a" style="left:1918px;top:92px;width:2px;height:613px;background:#a8a8a8"></div>
<div class="a" style="left:338px;top:146px;width:21px;height:531px;background:#f0f0f0"></div>
<div class="a" style="left:359px;top:146px;width:18px;height:531px;background:#f0f0f0;background-image:repeating-conic-gradient(#ececec 0 25%, #fafafa 0 50%);background-size:2px 2px"></div>
<div class="a" style="left:377px;top:146px;width:6px;height:531px;background:#f0f0f0"></div>
<div class="a" style="left:383px;top:146px;width:1509px;height:20px;background:#f5f5f5"></div>
<div class="a" style="left:1084px;top:146px;width:1px;height:531px;background:#e6e6e6"></div>
<svg style="left:360px;top:169px" width="18" height="332"><rect x="0.5" y="0.5" width="14" height="14" fill="#fff" stroke="#606060"/><line x1="3" y1="7.5" x2="12" y2="7.5" stroke="#606060" stroke-width="1.5"/><line x1="7.5" y1="15" x2="7.5" y2="327.5" stroke="#606060"/><line x1="7.5" y1="327.5" x2="16" y2="327.5" stroke="#606060"/></svg>
<div class="code" style="top:148px"><span class="g">/* USER CODE BEGIN Header */</span>
<span class="d">/**</span>
<span class="d">  <span class="st">******************************************************************************</span></span>
<span class="d">  <span class="st1">*</span> <span class="k">@file</span>           : main.c</span>
<span class="d">  <span class="st1">*</span> <span class="k">@brief</span>          : Main program body</span>
<span class="d">  <span class="st">******************************************************************************</span></span>
<span class="d">  <span class="st1">*</span> <span class="k">@attention</span></span>
<span class="d">  <span class="st1">*</span></span>
<span class="d">  <span class="st1">*</span> &lt;h2&gt;&lt;center&gt;&amp;copy; Copyright (c) 2021 STMicroelectronics.</span>
<span class="d">  <span class="st1">*</span> All rights reserved.&lt;/center&gt;&lt;/h2&gt;</span>
<span class="d">  <span class="st1">*</span></span>
<span class="d">  <span class="st1">*</span> This software component is licensed by ST under BSD 3-Clause license,</span>
<span class="d">  <span class="st1">*</span> the "License"; You may not use this file except in compliance with the</span>
<span class="d">  <span class="st1">*</span> License. You may obtain a copy of the License at:</span>
<span class="d">  <span class="st1">*</span>                        opensource.org/licenses/BSD-3-Clause</span>
<span class="d">  <span class="st1">*</span></span>
<span class="d">  <span class="st">******************************************************************************</span></span>
<span class="d">  <span class="st1">*</span>/</span>
<span class="g">/* USER CODE END Header */</span>
<span class="g">/* Includes ------------------------------------------------------------------*/</span>
<span class="p">#include</span> <span class="s">"main.h"</span>
<span class="p">#include</span> <span class="s">"adc.h"</span>
<span class="p">#include</span> <span class="s">"dma.h"</span>
<span class="p">#include</span> <span class="s">"spi.h"</span>
<span class="p">#include</span> <span class="s">"usart.h"</span>
<span class="p">#include</span> <span class="s">"gpio.h"</span></div>
<div class="a" style="left:1892px;top:146px;width:21px;height:552px;background:#f0f0f0"></div>
<div class="a" style="left:1892px;top:168px;width:21px;height:70px;background:#cdcdcd"></div>
<svg style="left:1897px;top:154px" width="10" height="6"><path d="M0.8 5 L5 0.8 L9.2 5" fill="none" stroke="#555" stroke-width="1.4"/></svg>
<svg style="left:1897px;top:685px" width="10" height="6"><path d="M0.8 0.8 L5 5 L9.2 0.8" fill="none" stroke="#555" stroke-width="1.4"/></svg>
<div class="a" style="left:338px;top:677px;width:1554px;height:21px;background:#f0f0f0"></div>
<div class="a" style="left:360px;top:678px;width:910px;height:19px;background:#cdcdcd"></div>
<svg style="left:345px;top:683px" width="6" height="10"><path d="M5 0.8 L0.8 5 L5 9.2" fill="none" stroke="#555" stroke-width="1.4"/></svg>
<svg style="left:1877px;top:683px" width="6" height="10"><path d="M0.8 0.8 L5 5 L0.8 9.2" fill="none" stroke="#555" stroke-width="1.4"/></svg>
<div class="a" style="left:0px;top:710px;width:1920px;height:24px;background:linear-gradient(#b8c9db,#d3e0ee)"></div>
<div class="t" style="left:4.89px;top:716px;font-size:14.5px;color:#1a1a1a;transform:scaleX(0.8720);transform-origin:0 0;">Build</div>
<svg style="left:1860px;top:718px" width="60" height="12"><path d="M0 2 H12 L6 8.7Z" fill="#000"/><path d="M24 0.9 H31 M25 0.9 V6.5 M30.3 0.9 V6.5" stroke="#000" stroke-width="1.8" fill="none"/><path d="M22.8 6.9 H32.2" stroke="#000" stroke-width="1.8"/><path d="M27.6 7 V10" stroke="#000" stroke-width="1.4"/><path d="M43.5 0.6 L52.5 9.2 M52.5 0.6 L43.5 9.2" stroke="#000" stroke-width="2"/></svg>
<svg style="left:267px;top:99px" width="60" height="12"><path d="M0 2 H12 L6 8.7Z" fill="#000"/><path d="M24 0.9 H31 M25 0.9 V6.5 M30.3 0.9 V6.5" stroke="#000" stroke-width="1.8" fill="none"/><path d="M22.8 6.9 H32.2" stroke="#000" stroke-width="1.8"/><path d="M27.6 7 V10" stroke="#000" stroke-width="1.4"/><path d="M43.5 0.6 L52.5 9.2 M52.5 0.6 L43.5 9.2" stroke="#000" stroke-width="2"/></svg>
<div class="a" style="left:0px;top:734px;width:1920px;height:1px;background:#eef1fa"></div>
<div class="a" style="left:0px;top:735px;width:1920px;height:1px;background:#b4b6c2"></div>
<div class="a" style="left:0px;top:736px;width:1920px;height:254px;background:#f8f9fd"></div>
<div class="a" style="left:0px;top:736px;width:1px;height:254px;background:#8a8a8a"></div>
<div class="a" style="left:5px;top:741px;width:1910px;height:245px;background:#fff;border-top:2px solid #808080;border-left:2px solid #808080;border-right:1px solid #e0e0e0;border-bottom:1px solid #e0e0e0"></div>
<div class="a" style="left:1915px;top:736px;width:3px;height:254px;background:#eef1fa"></div>
<div class="a" style="left:1918px;top:736px;width:2px;height:254px;background:#a8a8a8"></div>
<div class="a" style="left:0px;top:989px;width:1920px;height:1px;background:#9a9a9a"></div>
<div class="a" style="left:32px;top:743px;width:1px;height:30px;background:#efefef"></div>
<div class="a" style="left:1237px;top:743px;width:1px;height:30px;background:#efefef"></div>
<div class="a" style="left:1838px;top:743px;width:1px;height:30px;background:#efefef"></div>
<div class="a" style="left:1888px;top:743px;width:1px;height:30px;background:#efefef"></div>
<div class="t" style="left:39.49px;top:750px;font-size:16.5px;color:#111;transform:scaleX(1.0662);transform-origin:0 0;">Messages</div>
<div class="t" style="left:1244.43px;top:750px;font-size:16.5px;color:#111;transform:scaleX(1.0407);transform-origin:0 0;">File</div>
<div class="t" style="left:1845.78px;top:750px;font-size:16.5px;color:#111;">Line</div>
<div class="t" style="left:36.42px;top:775px;font-size:16px;color:#1c1c1c;">stm32f0xx_hal_uart_ex.c</div>
<div class="t" style="left:36.42px;top:797px;font-size:16px;color:#1c1c1c;">stm32f0xx_hal_uart.c</div>
<div class="t" style="left:35.83px;top:818px;font-size:16px;color:#1c1c1c;transform:scaleX(1.0308);transform-origin:0 0;">learn.out</div>
<div class="t" style="left:35.82px;top:839px;font-size:16px;color:#1c1c1c;transform:scaleX(1.0365);transform-origin:0 0;">learn.hex</div>
<div class="t" style="left:36.49px;top:882px;font-size:16px;color:#1c1c1c;transform:scaleX(1.0307);transform-origin:0 0;">Total number of errors: 0</div>
<div class="t" style="left:36.49px;top:903px;font-size:16px;color:#1c1c1c;transform:scaleX(1.0260);transform-origin:0 0;">Total number of warnings: 0</div>
<div class="t" style="left:35.51px;top:945px;font-size:16px;color:#1c1c1c;transform:scaleX(1.0857);transform-origin:0 0;">Build succeeded</div>
<div class="a" style="left:1892px;top:743px;width:21px;height:242px;background:#f0f0f0"></div>
<div class="a" style="left:1892px;top:914px;width:21px;height:49px;background:#cdcdcd"></div>
<svg style="left:1897px;top:751px" width="10" height="6"><path d="M0.8 5 L5 0.8 L9.2 5" fill="none" stroke="#555" stroke-width="1.4"/></svg>
<svg style="left:1897px;top:969px" width="10" height="6"><path d="M0.8 0.8 L5 5 L9.2 0.8" fill="none" stroke="#555" stroke-width="1.4"/></svg>
<div class="a" style="left:0px;top:990px;width:1920px;height:29px;background:#edf0fa"></div>
<div class="a" style="left:0px;top:990px;width:1px;height:25px;background:#8a8a8a"></div>
<div class="a" style="left:53px;top:990px;width:88px;height:25px;background:#f0f0f0;border-right:1px solid #dcdcdc;border-bottom:1px solid #dcdcdc"></div>
<div class="a" style="left:3px;top:991px;width:50px;height:24px;background:#fff"></div>
<div class="t" style="left:9.14px;top:997px;font-size:14.5px;color:#000;transform:scaleX(1.0428);transform-origin:0 0;">Build</div>
<div class="t" style="left:59.72px;top:997px;font-size:14.5px;color:#8a8a8a;transform:scaleX(1.0130);transform-origin:0 0;">Debug Log</div>
<div class="a" style="left:53px;top:991px;width:1px;height:24px;background:#dcdcdc"></div>
<div class="a" style="left:0px;top:1019px;width:1920px;height:24px;background:#f0f0f0"></div>
<div class="a" style="left:0px;top:1019px;width:1920px;height:1px;background:#dadada"></div>
<div class="t" style="left:7.24px;top:1026px;font-size:14.5px;color:#000;transform:scaleX(0.9957);transform-origin:0 0;">D:\Documents\learn\Core\Src\main.c</div>
<div class="a" style="left:1224px;top:1021px;width:1px;height:22px;background:#d8d8d8"></div>
<div class="a" style="left:1356px;top:1021px;width:1px;height:22px;background:#d8d8d8"></div>
<div class="a" style="left:1526px;top:1021px;width:1px;height:22px;background:#d8d8d8"></div>
<div class="a" style="left:1696px;top:1021px;width:1px;height:22px;background:#d8d8d8"></div>
<div class="a" style="left:1754px;top:1021px;width:1px;height:22px;background:#d8d8d8"></div>
<div class="a" style="left:1794px;top:1021px;width:1px;height:22px;background:#d8d8d8"></div>
<div class="a" style="left:1834px;top:1021px;width:1px;height:22px;background:#d8d8d8"></div>
<div class="a" style="left:1874px;top:1021px;width:1px;height:22px;background:#d8d8d8"></div>
<div class="t" style="left:1361.45px;top:1026px;font-size:13.6px;color:#1a1a1a;transform:scaleX(1.0601);transform-origin:0 0;">Errors 0, Warnings 0</div>
<div class="t" style="left:1531.39px;top:1026px;font-size:13.6px;color:#808080;transform:scaleX(1.0189);transform-origin:0 0;">Ln 1, Col 1</div>
<div class="t" style="left:1701.89px;top:1026px;font-size:13.6px;color:#808080;transform:scaleX(0.9888);transform-origin:0 0;">System</div>
<svg style="left:1760px;top:1024px" width="16" height="16" viewBox="0 0 15 15"><g fill="none" stroke="#7a7a7a" stroke-width="1.3" stroke-linecap="square"><path d="M1 5 H14"/><path d="M7.5 1 V5 Q7 10 1.5 14"/><path d="M8 6 Q10 11 14 14"/></g></svg>
<svg style="left:1776px;top:1024px" width="16" height="16" viewBox="0 0 15 15"><g fill="none" stroke="#7a7a7a" stroke-width="1.3" stroke-linecap="square"><path d="M1.5 4 V2 H13.5 V4"/><path d="M4 5.5 H12 L11 8.5"/><path d="M4 5.5 L3.3 8.5 H13 Q13 13 10.5 13.5"/><path d="M2 11 H10"/></g></svg>
<svg style="left:1800px;top:1024px" width="16" height="16" viewBox="0 0 15 15"><g fill="none" stroke="#111" stroke-width="1.5" stroke-linecap="square"><path d="M1 3 H7"/><path d="M4 1 V7"/><path d="M2 1.5 L3 2.5 M6 1.5 L5 2.5"/><path d="M1.5 6 L4 4.5 L6.5 6"/><path d="M1 9.5 H7"/><path d="M4.5 8 Q4 12 1.5 14"/><path d="M2.5 11.5 L6.5 14"/><path d="M9.5 1 L8.5 5.5"/><path d="M9 4 H14"/><path d="M13 4 Q12 10 8.5 14"/><path d="M9.5 7 Q11 11 14 14"/></g></svg>
<svg style="left:1816px;top:1024px" width="16" height="16" viewBox="0 0 15 15"><g fill="none" stroke="#111" stroke-width="1.5" stroke-linecap="square"><path d="M7.5 0.8 V2"/><path d="M1.5 4.5 V2.5 H13.5 V4.5"/><path d="M4 5.5 H11 L7.5 8"/><path d="M7.5 8 V13.5 Q7.5 14 6 13.5"/><path d="M1 9.5 H14"/></g></svg>
<svg style="left:1840px;top:1024px" width="16" height="16" viewBox="0 0 15 15"><g fill="none" stroke="#7a7a7a" stroke-width="1.3" stroke-linecap="square"><path d="M1 2 H6 V7 H1.5 V12.5 Q1.5 13.5 6.5 13"/><path d="M9.5 1 L8 6"/><path d="M8.8 4 H14"/><path d="M12.5 4 Q12 10 8 14"/><path d="M9.5 7 Q11 11 14 14"/></g></svg>
<svg style="left:1856px;top:1024px" width="16" height="16" viewBox="0 0 15 15"><g fill="none" stroke="#7a7a7a" stroke-width="1.3" stroke-linecap="square"><path d="M1.5 4 V2 H13.5 V4"/><path d="M4 5.5 H12 L11 8.5"/><path d="M4 5.5 L3.3 8.5 H13 Q13 13 10.5 13.5"/><path d="M2 11 H10"/></g></svg>
<svg style="left:1880px;top:1024px" width="32" height="16"><rect width="32" height="16" fill="#f6dede"/><rect x="0" y="0.00" width="32" height="1.23" fill="#c8282c"/><rect x="0" y="2.46" width="32" height="1.23" fill="#c8282c"/><rect x="0" y="4.92" width="32" height="1.23" fill="#c8282c"/><rect x="0" y="7.38" width="32" height="1.23" fill="#c8282c"/><rect x="0" y="9.85" width="32" height="1.23" fill="#c8282c"/><rect x="0" y="12.31" width="32" height="1.23" fill="#c8282c"/><rect x="0" y="14.77" width="32" height="1.23" fill="#c8282c"/><rect width="13" height="8.6" fill="#3c3f9a"/></svg>
<div class="a" style="left:0px;top:1042px;width:1920px;height:1px;background:#e4e6f2"></div>
</body></html>
